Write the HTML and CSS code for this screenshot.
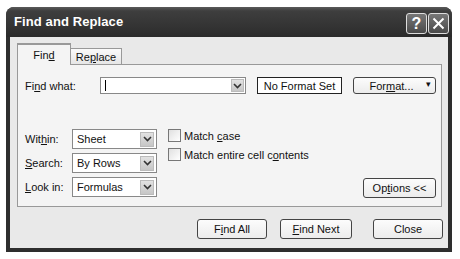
FILE: index.html
```html
<!DOCTYPE html>
<html>
<head>
<meta charset="utf-8">
<link rel="stylesheet" href="styles.css">
</head>
<body>
<div class="window">
  <div class="titlebar">
    <span class="title">Find and Replace</span>
    <div class="tbtns">
      <span class="tbtn">?</span>
      <span class="tbtn">
        <svg width="13" height="13" viewBox="0 0 13 13"><path d="M1.5 1.5 L11.5 11.5 M11.5 1.5 L1.5 11.5" stroke="#fff" stroke-width="2" fill="none"/></svg>
      </span>
    </div>
  </div>
  <div class="client">
    <div class="tabs">
      <div class="tab active">Fin<u>d</u></div>
      <div class="tab">Re<u>p</u>lace</div>
    </div>
    <div class="panel">
      <div class="find-row">
        <span class="label find-label">Fi<u>n</u>d what:</span>
        <div class="combo wide">
          <span class="caret"></span>
          <span class="arrow"><svg width="9" height="6" viewBox="0 0 9 6"><path d="M1 1 L4.5 4.5 L8 1" stroke="#333" stroke-width="1.6" fill="none"/></svg></span>
        </div>
        <div class="noformat">No Format Set</div>
        <div class="btn format-btn"><span>For<u>m</u>at...</span><span class="tri">▾</span></div>
      </div>
      <div class="options">
        <div class="selects">
          <div class="sel-row"><span class="label">Wit<u>h</u>in:</span><div class="combo sel"><span class="val">Sheet</span><span class="arrow"><svg width="9" height="6" viewBox="0 0 9 6"><path d="M1 1 L4.5 4.5 L8 1" stroke="#333" stroke-width="1.6" fill="none"/></svg></span></div></div>
          <div class="sel-row"><span class="label"><u>S</u>earch:</span><div class="combo sel"><span class="val">By Rows</span><span class="arrow"><svg width="9" height="6" viewBox="0 0 9 6"><path d="M1 1 L4.5 4.5 L8 1" stroke="#333" stroke-width="1.6" fill="none"/></svg></span></div></div>
          <div class="sel-row"><span class="label"><u>L</u>ook in:</span><div class="combo sel"><span class="val">Formulas</span><span class="arrow"><svg width="9" height="6" viewBox="0 0 9 6"><path d="M1 1 L4.5 4.5 L8 1" stroke="#333" stroke-width="1.6" fill="none"/></svg></span></div></div>
        </div>
        <div class="checks">
          <div class="check-row"><span class="box"></span><span>Match <u>c</u>ase</span></div>
          <div class="check-row"><span class="box"></span><span>Match entire cell c<u>o</u>ntents</span></div>
        </div>
        <div class="opt-wrap">
          <div class="btn opt-btn">Op<u>t</u>ions &lt;&lt;</div>
        </div>
      </div>
    </div>
    <div class="buttons">
      <div class="btn bbtn findall">F<u>i</u>nd All</div>
      <div class="btn bbtn findnext"><u>F</u>ind Next</div>
      <div class="btn bbtn close">Close</div>
    </div>
  </div>
</div>
</body>
</html>
```
FILE: styles.css
```css
* { box-sizing: border-box; }
html, body { margin: 0; padding: 0; background: #fff; }
body {
  font-family: "Liberation Sans", Arial, sans-serif;
  font-size: 11px;
  color: #111;
  padding: 7px 0 0 6px;
}
u { text-decoration: underline; text-underline-offset: 1px; }
.window {
  width: 446px;
  height: 245px;
  background: #2e2e2e;
  border-radius: 8px 8px 0 0;
  padding: 0 4px 4px 4px;
  display: flex;
  flex-direction: column;
}
.titlebar {
  height: 30px;
  display: flex;
  align-items: flex-start;
  justify-content: space-between;
  padding: 0 0 0 4px;
  background: linear-gradient(#5a5a5a 0, #3e3e3e 4px, #333 20px, #2a2a2a 30px);
  border-radius: 8px 8px 0 0;
  margin: 0 -4px;
  padding-left: 8px;
  padding-right: 3px;
}
.title {
  color: #fff;
  font-weight: bold;
  font-size: 13px;
  line-height: 30px;
  letter-spacing: 0.1px;
}
.tbtns { display: flex; gap: 1px; margin-top: 6px; }
.tbtn {
  width: 21px;
  height: 21px;
  border: 1px solid #ddd;
  border-radius: 3px;
  background: linear-gradient(#777, #4a4a4a);
  color: #fff;
  font-weight: bold;
  font-size: 16px;
  display: flex;
  align-items: center;
  justify-content: center;
  line-height: 1;
}
.client {
  flex: 1;
  background: #e9e9e9;
  padding-top: 6px;
  display: flex;
  flex-direction: column;
}
.tabs {
  display: flex;
  align-items: flex-end;
  padding-left: 7px;
  height: 21px;
  position: relative;
  z-index: 1;
}
.tab {
  height: 16px;
  width: 51px;
  border: 1px solid #999;
  border-bottom: none;
  border-left: none;
  background: linear-gradient(#fafafa, #e6e6e6);
  display: flex;
  align-items: center;
  justify-content: center;
  padding-top: 1px;
  font-size: 11px;
}
.tab.active {
  height: 22px;
  width: 54px;
  border-left: 1px solid #999;
  background: #f4f4f4;
  margin-bottom: -1px;
  border-top: 2px solid #999;
  padding-top: 0;
}
.panel {
  margin: 0 6px 0 7px;
  height: 143px;
  border: 1px solid #999;
  background: #f4f4f4;
  padding: 12px 5px 0 7px;
  display: flex;
  flex-direction: column;
}
.find-row {
  display: flex;
  align-items: center;
  height: 17px;
}
.label { display: inline-block; }
.find-label { width: 75px; }
.combo {
  background: #fff;
  border: 1px solid #888;
  display: flex;
  align-items: center;
  justify-content: space-between;
  padding: 1px 1px 1px 3px;
}
.combo.wide { width: 146px; height: 17px; }
.caret { width: 1px; height: 11px; background: #000; margin-left: 1px; }
.arrow {
  width: 13px;
  height: 13px;
  background: linear-gradient(#e2e2e2, #c6c6c6);
  border: 1px solid #bbb;
  display: flex;
  align-items: center;
  justify-content: center;
}
.combo.wide .arrow { height: 13px; }
.noformat {
  margin-left: 11px;
  width: 85px;
  height: 17px;
  border: 1px solid #222;
  background: #fff;
  display: flex;
  align-items: center;
  justify-content: center;
}
.btn {
  border: 1px solid #444;
  border-radius: 3px;
  background: linear-gradient(#fcfcfc, #ececec);
  display: flex;
  align-items: center;
  justify-content: center;
}
.format-btn {
  margin-left: 11px;
  width: 83px;
  height: 17px;
  position: relative;
  padding-right: 6px;
}
.format-btn .tri {
  position: absolute;
  right: 4px;
  top: 1px;
  font-size: 9px;
}
.options {
  display: flex;
  margin-top: 35px;
  flex: 1;
}
.selects { display: flex; flex-direction: column; gap: 4px; }
.sel-row { display: flex; align-items: center; height: 20px; }
.sel-row .label { width: 47px; }
.combo.sel { width: 85px; height: 20px; padding: 2px 2px 2px 4px; }
.combo.sel .arrow { height: 15px; width: 14px; }
.checks {
  margin-left: 11px;
  display: flex;
  flex-direction: column;
  gap: 6px;
}
.check-row { display: flex; align-items: center; height: 13px; gap: 3px; }
.box {
  width: 13px;
  height: 13px;
  border: 1px solid #777;
  background: linear-gradient(135deg, #e0e0e0, #fff);
}
.opt-wrap {
  flex: 1;
  display: flex;
  align-items: flex-end;
  justify-content: flex-end;
  padding-bottom: 8px;
}
.opt-btn { width: 73px; height: 20px; }
.buttons {
  display: flex;
  padding-left: 187px;
  margin-top: 12px;
}
.bbtn { height: 20px; width: 70px; }
.findnext { margin-left: 13px; width: 72px; }
.close { margin-left: 21px; }
```
